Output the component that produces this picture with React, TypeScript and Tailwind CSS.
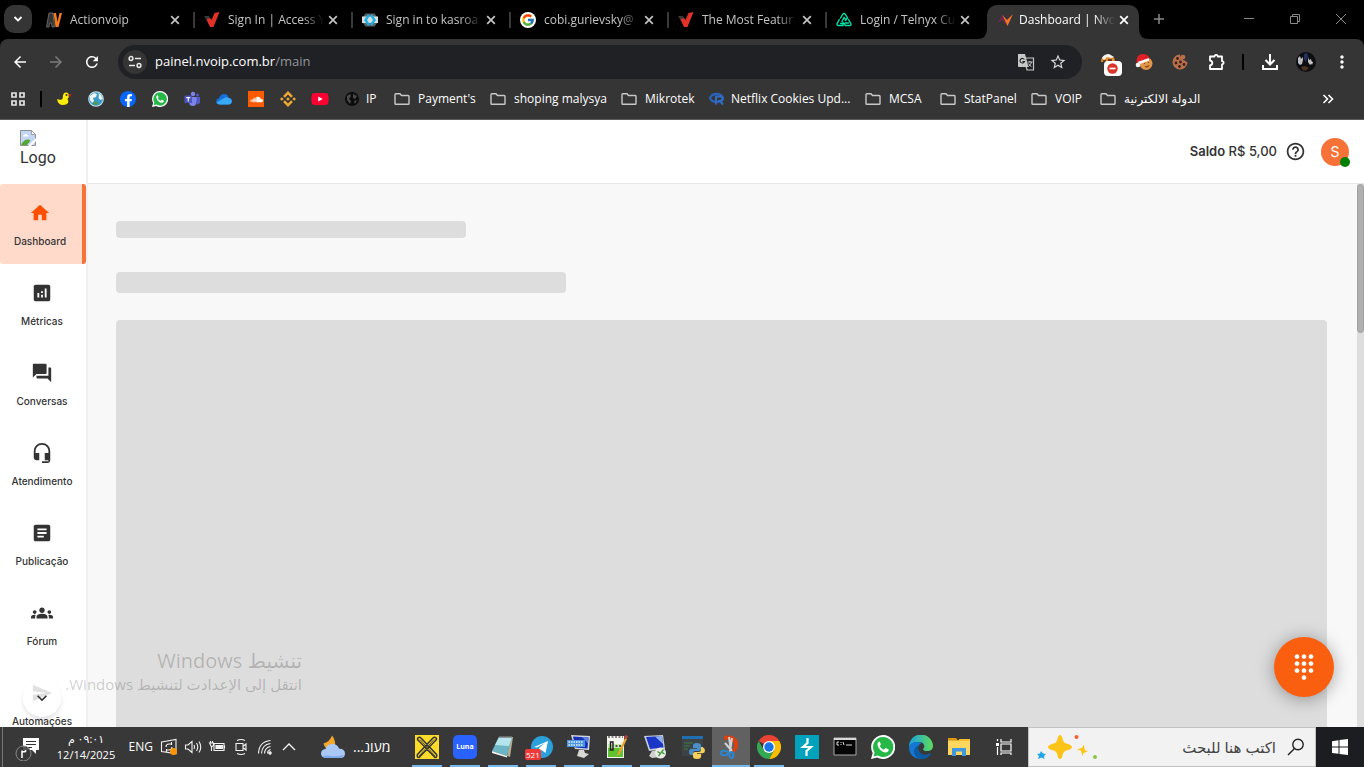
import type { ReactNode } from 'react';
import clsx from 'clsx';
import { FcGoogle } from 'react-icons/fc';
import { FaSoundcloud, FaFacebookF, FaYoutube } from 'react-icons/fa';
import { SiBinance } from 'react-icons/si';
import {
  MdAnalytics,
  MdArrowBack,
  MdArrowForward,
  MdArticle,
  MdDialpad,
  MdForum,
  MdGroups,
  MdHeadsetMic,
  MdHelpOutline,
  MdHome,
  MdKeyboardArrowDown,
  MdMoreVert,
  MdRefresh,
  MdSend,
  MdStarBorder,
} from 'react-icons/md';

/* ---------- small drawings ---------- */

const ActionVoipIcon = () => (
  <svg viewBox="0 0 16 16" className="size-4">
    <path d="M.500 15 3 1h4l1.500 14H6l-.5-4H3.500L3 15z" fill="#333" stroke="#777" strokeWidth="0.800" />
    <path d="M7.500 1H10l1.500 9L13.500 1H16l-3.500 14H9.500z" fill="#f47b20" />
  </svg>
);

const CheckVIcon = () => (
  <svg viewBox="0 0 16 16" className="size-4">
    <path d="M0 4h5l2 4-2 4z" fill="#3a3a3a" />
    <path d="M2.500 7.500 6 6l1.500 2L10.500 1l5-1L9.500 15H6z" fill="#e23227" />
  </svg>
);

const HexCodeIcon = () => (
  <svg viewBox="0 0 16 16" className="size-4">
    <path d="M3.500 1.500h9L15 5v6l-2.500 3.500h-9L1 11V5z" fill="#5c6165" />
    <path d="M0 4.500h16v6.500H0z" fill="#d9dde0" />
    <path d="M7 3 3.500 8 7 13M9 3l3.500 5L9 13" fill="none" stroke="#1bb0e4" strokeWidth="2.400" />
  </svg>
);

const GoogleTabIcon = () => (
  <span className="flex size-4 items-center justify-center rounded-full bg-white">
    <FcGoogle className="size-[14px]" />
  </span>
);

const TelnyxIcon = () => (
  <svg viewBox="0 0 16 16" className="size-4" fill="none" stroke="#00e3aa" strokeWidth="1.400" strokeLinecap="round">
    <path d="M4.500 6 7 2q1-1.200 2 0l2.500 4-2 2.500" />
    <path d="M3.300 7.500 1.200 11.500q-.6 2 1.200 2H7v-3" />
    <path d="M12.500 7.500l2.300 4q.6 2-1.200 2H9.500L8 11" />
    <path d="M6 9.500 8 5.500l1.500 2M4.500 11.500h3M9.500 11h3" />
  </svg>
);

const NvoipIcon = () => (
  <svg viewBox="0 0 16 16" className="size-4">
    <path d="M0 12 5.500 2l4.500 7-1.500 3.500L5 8z" fill="#6b2a4a" />
    <path d="M5.500 3 10 8l6-6-5.500 12z" fill="#f5722d" />
  </svg>
);

const CloseIcon = () => (
  <svg viewBox="0 0 10 10" className="size-[10px]" stroke="currentColor" strokeWidth="1.700">
    <path d="M1.200 1.200 8.800 8.800M8.800 1.200 1.200 8.800" />
  </svg>
);

const FolderIcon = () => (
  <svg viewBox="0 0 16 16" className="size-4 shrink-0" fill="none" stroke="#c8c8c8" strokeWidth="1.400">
    <path d="M1 12.500v-9q0-.8.8-.8H6L7.500 4.500h6.700q.8 0 .8.800v7.200q0 .8-.8.800H1.800q-.8 0-.8-.8z" />
  </svg>
);

const DuckIcon = () => (
  <svg viewBox="0 0 16 16" className="size-4">
    <path d="M1 8q2 1 5 .5Q7 7 7 4.500 7.500 1.500 10 1.500q2.600 0 3 3 0 2-1.500 3.500Q13 10 12 12q-1.500 2-5 2-5 0-6-6z" fill="#fcee09" />
    <path d="M12.500 3.500 15.500 3l-1 2.500h-2z" fill="#c4251a" />
    <circle cx="10.500" cy="4" r="0.900" fill="#222" />
  </svg>
);

const EarthIcon = () => (
  <svg viewBox="0 0 16 16" className="size-4">
    <circle cx="8" cy="8" r="7.800" fill="#c9e6f2" />
    <circle cx="8" cy="8" r="6.800" fill="#3c9bcb" />
    <path d="M2 5l4-3 3 1-1 3-3 1 1 3-2 2-2-3zM10 2l3 2 1.500 4-2 1-2-2 .5-3z" fill="#eef5f0" />
    <path d="M5 12l3-2 2 2-1 2H6z" fill="#4f9a4a" />
  </svg>
);

const FacebookIcon = () => (
  <span className="flex size-4 items-end justify-center rounded-full bg-[#0866ff] text-white">
    <FaFacebookF className="size-[13px]" />
  </span>
);

const WhatsAppIcon = ({ size }: { size: string }) => (
  <svg viewBox="0 0 24 24" className={size}>
    <path d="M12 0a12 12 0 0 0-10.300 18L0 24l6.200-1.600A12 12 0 1 0 12 0z" fill="#fff" />
    <path d="M12 2a10 10 0 0 0-8.500 15.200L2.600 21.400l4.300-1A10 10 0 1 0 12 2z" fill="#25b847" />
    <path d="M8.200 6.500c-.5 0-1.700 1-1.700 2.700 0 3.500 4.500 8.300 8.200 8.300 1.600 0 2.900-1 3-2.200.1-.7 0-.9-.4-1.100l-2.200-1c-.4-.2-.6-.1-.9.200l-.9 1.100c-.2.200-.5.200-.8.100-1.300-.5-2.900-1.900-3.600-3.300-.1-.3 0-.5.200-.7l.6-.8c.2-.3.200-.5.100-.8l-.9-2.100c-.2-.4-.4-.4-.7-.4z" fill="#fff" />
  </svg>
);

const TeamsIcon = () => (
  <svg viewBox="0 0 16 16" className="size-4">
    <circle cx="9" cy="3" r="2.200" fill="#7b83eb" />
    <circle cx="13.500" cy="4" r="1.500" fill="#5059c9" />
    <path d="M11 6h5v4.500q0 3-3 3z" fill="#5059c9" />
    <path d="M5 6h7.500v5q0 4-3.700 4Q5 15 5 11z" fill="#7b83eb" />
    <rect x="0.500" y="4.500" width="7.500" height="7.500" rx="0.800" fill="#4b53bc" />
    <path d="M2.300 6.600h4M4.300 6.600v4" stroke="#fff" strokeWidth="1.100" />
  </svg>
);

const OneDriveIcon = () => (
  <svg viewBox="0 0 16 16" className="size-4">
    <path d="M3.500 13.500Q0 13.500.2 10 .5 7.500 3 7.200 4.500 3 8.500 3q3.300.2 4.200 3.800Q16 7.500 15.800 10.200q-.3 3.300-3.300 3.300z" fill="#1570dc" />
    <path d="M.5 11.500 9 6.500q2-.5 3.700.4Q16 7.500 15.800 10.200q-.3 3.300-3.300 3.300h-9q-2 0-3-2z" fill="#3aa9f5" />
  </svg>
);

const SoundcloudIcon = () => (
  <span className="flex size-4 items-center justify-center bg-[#ff5a00] text-white">
    <FaSoundcloud className="size-[13px]" />
  </span>
);

const GlobeDarkIcon = () => (
  <svg viewBox="0 0 16 16" className="size-4 shrink-0">
    <circle cx="8" cy="8" r="7" fill="#0c0c0c" />
    <path d="M3 5l3-2 1 2-2 3 2 2-1 3-3-4zM9 3l4 2-2 3-2-1zM10 10l3-1-2 4z" fill="#4a4a4a" />
  </svg>
);

const RIcon = () => (
  <svg viewBox="0 0 16 16" className="size-4 shrink-0">
    <ellipse cx="7.500" cy="7" rx="6.300" ry="4" fill="none" stroke="#2b62b5" strokeWidth="2.400" />
    <path d="M7 13.500V5.500h4.500q2.300.2 2.300 2.300T11.500 10H9M11 10l3 3.500" fill="none" stroke="#2f6cc4" strokeWidth="2" />
  </svg>
);

const TuneIcon = () => (
  <svg viewBox="0 0 16 16" className="size-4" fill="none" stroke="#e8e8e8" strokeWidth="1.500">
    <circle cx="4" cy="4.500" r="1.900" />
    <path d="M8 4.500h6M2 11.500h6" />
    <circle cx="12" cy="11.500" r="1.900" />
  </svg>
);

const TranslateIcon = () => (
  <svg viewBox="0 0 18 18" className="size-[18px]">
    <path d="M7 5h9.500v12H10z" fill="none" stroke="#c7c7c7" strokeWidth="1.200" />
    <path d="M1 1h7L11.500 14H2q-1 0-1-1z" fill="#c7c7c7" />
    <path d="M7.300 6.500A2.300 2.300 0 1 0 7.500 8.500H5.500" fill="none" stroke="#202124" strokeWidth="1.100" />
    <path d="M10.500 9h5M13 8v1m1.500 0q-.5 2.500-3 4.500m0-3q1 2 3 3.200" fill="none" stroke="#c7c7c7" strokeWidth="1" />
  </svg>
);

const BlockerIcon = () => (
  <span className="relative flex size-5 items-center justify-center">
    <svg viewBox="0 0 20 20" className="size-5">
      <path d="M3 10q0-7 7-7t7 7z" fill="#e98a2c" />
      <path d="M4 6q2-4 7-4l5 3-3 1-4-1-3 3z" fill="#f4f4f4" />
      <path d="M5 9h3M10 8h4" stroke="#3a2a20" strokeWidth="1.400" />
    </svg>
    <svg viewBox="0 0 18 15" className="absolute top-[9px] left-[6px] h-[15px] w-[18px]">
      <rect width="18" height="15" rx="4" fill="#fff" />
      <circle cx="8.500" cy="7.500" r="5.200" fill="#d9352a" />
      <path d="M5.500 7.500h6" stroke="#fff" strokeWidth="1.700" />
    </svg>
  </span>
);

const SantaCookieIcon = () => (
  <svg viewBox="0 0 18 18" className="size-[18px]">
    <circle cx="11" cy="10.500" r="6.500" fill="#e0954a" />
    <path d="M9 10.500h1M13 9.500h1M10 13.500q2 1 4-1" stroke="#8b4a1a" strokeWidth="1.200" fill="none" />
    <path d="M1.500 10Q1 1 8 1q5 0 7 5z" fill="#e01f26" />
    <path d="M2.500 9 14 5v2.500L5 11z" fill="#fff" />
    <circle cx="3" cy="12" r="2.300" fill="#f7f7f7" />
  </svg>
);

const CookieIcon = () => (
  <svg viewBox="0 0 16 16" className="size-4">
    <path d="M8 .5A7.500 7.500 0 1 0 15.500 8q-2 0-2.500-1.500-2.500 0-2.500-2.500Q8 3 8 .5z" fill="#b9704a" />
    <circle cx="11" cy="3" r="2.300" fill="#b9704a" />
    <g fill="#3a201a">
      <circle cx="5.500" cy="4.500" r="1.400" />
      <circle cx="4" cy="9" r="1.400" />
      <circle cx="8.500" cy="8" r="1.400" />
      <circle cx="7.500" cy="12.500" r="1.400" />
      <circle cx="12" cy="10.500" r="1.400" />
    </g>
  </svg>
);

const ExtensionIcon = () => (
  <svg viewBox="0 0 18 18" className="size-[18px]" fill="none" stroke="#fff" strokeWidth="1.800">
    <path d="M3 3.500h4.500a1.600 1.600 0 0 1 3.200 0H15v4.700a1.600 1.600 0 0 1 0 3.200V16H3v-3.500q2.300-.5 2.300-2.500T3 7.500z" strokeLinejoin="round" />
  </svg>
);

const DownloadIcon = () => (
  <svg viewBox="0 0 18 18" className="size-[18px]" fill="none" stroke="#fff" strokeWidth="2">
    <path d="M9 1v10M4.500 7 9 11.500 13.500 7M2 12v4h14v-4" />
  </svg>
);

const ProfileIcon = () => (
  <svg viewBox="0 0 20 20" className="size-5">
    <circle cx="10" cy="10" r="10" fill="#0d0e12" />
    <path d="M2 6l2-2 1 3 2-2v3l-1 4-2 1-2-2zM12 5l1 3 2-1 1 4-2 2-2-3z" fill="#b9bdc0" />
    <path d="M8 2l3-1 1 3-2 6-2-3z" fill="#27315e" />
    <path d="M14 9l3 1-1 3z" fill="#d9cfc4" />
    <path d="M5 15l4-1 4 2-3 2.500H7z" fill="#4a331c" />
  </svg>
);

const BrokenImageIcon = () => (
  <svg viewBox="0 0 16 16" className="size-4">
    <path d="M.5.500h11l4 4v11H.500z" fill="#c3d5f5" stroke="#8f8f8f" />
    <path d="M11.500.500v4h4z" fill="#fff" stroke="#8f8f8f" strokeWidth="0.800" />
    <path d="M3 6.500q0-2 2-2 1.500-1.500 2.500.5 1.500.2 1 1.500z" fill="#fff" />
    <path d="M1 15q3-6 7-5.500 1.500 0 2.500 1L7 15z" fill="#51a731" />
    <path d="M8 16 16 8v3l-5 5z" fill="#fff" />
  </svg>
);

/* ---------- browser chrome ---------- */

const TABS: { title: string; icon: ReactNode }[] = [
  { title: 'Actionvoip', icon: <ActionVoipIcon /> },
  { title: 'Sign In | Access Y', icon: <CheckVIcon /> },
  { title: 'Sign in to kasroa', icon: <HexCodeIcon /> },
  { title: 'cobi.gurievsky@', icon: <GoogleTabIcon /> },
  { title: 'The Most Featur', icon: <CheckVIcon /> },
  { title: 'Login / Telnyx Cu', icon: <TelnyxIcon /> },
];

// long titles fade out just before the close button
const TITLE = 'w-24 overflow-hidden whitespace-nowrap [mask-image:linear-gradient(to_right,black_78%,transparent)]';

function TabStrip() {
  return (
    <div className="flex h-[39px] items-start bg-black text-xs text-[#c4c4c4]">
      <button aria-label="Search tabs" className="mt-[5px] mr-1.5 ml-1 flex size-7 items-center justify-center rounded-[10px] bg-[#353535] text-white">
        <svg viewBox="0 0 10 10" className="size-[10px]" fill="none" stroke="currentColor" strokeWidth="1.800">
          <path d="M1.500 3 5 6.500 8.500 3" />
        </svg>
      </button>
      {TABS.map((tab, i) => (
        <div key={tab.title} className="flex h-[39px] w-[158px] items-center pl-2">
          {tab.icon}
          <span className={clsx(TITLE, 'ml-2')}>{tab.title}</span>
          <button aria-label={`Close ${tab.title}`} className="flex size-[18px] items-center justify-center">
            <CloseIcon />
          </button>
          {i < TABS.length - 1 && <span className="ml-[9px] h-4 w-0.5 bg-[#3a3a3a]" />}
        </div>
      ))}
      <div className="relative mt-[5px] ml-px flex h-[34px] w-[152px] items-center rounded-t-[10px] bg-[#353535] pb-1 pl-[10px] text-white">
        <svg viewBox="0 0 10 10" className="absolute bottom-0 -left-[10px] size-[10px]">
          <path d="M10 0v10H0Q10 10 10 0z" fill="#353535" />
        </svg>
        <svg viewBox="0 0 10 10" className="absolute -right-[10px] bottom-0 size-[10px]">
          <path d="M0 0v10h10Q0 10 0 0z" fill="#353535" />
        </svg>
        <NvoipIcon />
        <span className={clsx(TITLE, 'ml-1.5')}>Dashboard | Nvo</span>
        <button aria-label="Close Dashboard" className="flex size-[18px] items-center justify-center">
          <CloseIcon />
        </button>
      </div>
      <button aria-label="New tab" className="mt-[9px] ml-[10px] flex size-5 items-center justify-center text-[#888]">
        <svg viewBox="0 0 12 12" className="size-3" stroke="currentColor" strokeWidth="1.500">
          <path d="M6 1v10M1 6h10" />
        </svg>
      </button>
      <div className="ml-auto flex h-[38px] text-[#8a8a8a]">
        <button aria-label="Minimize" className="flex w-[46px] items-center justify-center">
          <svg viewBox="0 0 10 10" className="size-[10px]" stroke="currentColor">
            <path d="M0 4.500h10" />
          </svg>
        </button>
        <button aria-label="Restore" className="flex w-[46px] items-center justify-center">
          <svg viewBox="0 0 10 10" className="size-[10px]" fill="none" stroke="currentColor">
            <path d="M.5 2.500h7v7h-7zM2.500 2.500v-2h7v7h-2" />
          </svg>
        </button>
        <button aria-label="Close window" className="flex w-[46px] items-center justify-center">
          <svg viewBox="0 0 10 10" className="size-[10px]" stroke="currentColor">
            <path d="M0 0l10 10M10 0 0 10" />
          </svg>
        </button>
      </div>
    </div>
  );
}

function Toolbar() {
  const slot = 'flex w-9 shrink-0 items-center justify-center';
  return (
    <div className="flex h-[46px] items-center rounded-t-lg bg-[#353535] pr-1 pl-0.5 text-white">
      <button aria-label="Back" className={slot}>
        <MdArrowBack className="size-[18px]" />
      </button>
      <button aria-label="Forward" className={clsx(slot, 'text-[#7c7c7c]')}>
        <MdArrowForward className="size-[18px]" />
      </button>
      <button aria-label="Reload" className={slot}>
        <MdRefresh className="size-[18px]" />
      </button>
      <div className="mx-2 flex h-[34px] flex-1 items-center rounded-full bg-[#202124] pr-[15px] pl-[5px]">
        <button aria-label="Site information" className="flex size-6 items-center justify-center rounded-full bg-[#353535]">
          <TuneIcon />
        </button>
        <div className="ml-2 flex-1 text-[13px]">
          painel.nvoip.com.br<span className="text-[#93969b]">/main</span>
        </div>
        <button aria-label="Translate" className="mr-3.5">
          <TranslateIcon />
        </button>
        <button aria-label="Bookmark" className="text-[#d5d5d5]">
          <MdStarBorder className="size-[18px]" />
        </button>
      </div>
      <button aria-label="Blocker" className={slot}><BlockerIcon /></button>
      <button aria-label="Santa cookie" className={slot}><SantaCookieIcon /></button>
      <button aria-label="Cookies" className={slot}><CookieIcon /></button>
      <button aria-label="Extensions" className={slot}><ExtensionIcon /></button>
      <span className="mx-2 h-4 w-0.5 bg-black" />
      <button aria-label="Downloads" className={slot}><DownloadIcon /></button>
      <button aria-label="Profile" className={slot}><ProfileIcon /></button>
      <button aria-label="Menu" className={slot}>
        <MdMoreVert className="size-5" />
      </button>
    </div>
  );
}

const SHORTCUTS: { name: string; icon: ReactNode }[] = [
  { name: 'Duck', icon: <DuckIcon /> },
  { name: 'Earth', icon: <EarthIcon /> },
  { name: 'Facebook', icon: <FacebookIcon /> },
  { name: 'WhatsApp', icon: <WhatsAppIcon size="size-4" /> },
  { name: 'Teams', icon: <TeamsIcon /> },
  { name: 'OneDrive', icon: <OneDriveIcon /> },
  { name: 'SoundCloud', icon: <SoundcloudIcon /> },
  { name: 'Binance', icon: <SiBinance className="size-4 text-[#f3a92f]" /> },
  {
    name: 'YouTube',
    icon: <FaYoutube className="size-[18px] text-[#ff0033] [background:linear-gradient(white,white)_center/6px_6px_no-repeat]" />,
  },
];

const BOOKMARKS: { name: string; width: string; icon?: ReactNode }[] = [
  { name: 'IP', width: 'w-[50px]', icon: <GlobeDarkIcon /> },
  { name: "Payment's", width: 'w-24' },
  { name: 'shoping malysya', width: 'w-[131px]' },
  { name: 'Mikrotek', width: 'w-[88px]' },
  { name: 'Netflix Cookies Upd...', width: 'w-[156px]', icon: <RIcon /> },
  { name: 'MCSA', width: 'w-[75px]' },
  { name: 'StatPanel', width: 'w-[91px]' },
  { name: 'VOIP', width: 'w-[69px]' },
  { name: 'الدولة الالكترنية', width: 'w-[110px]' },
];

function BookmarksBar() {
  return (
    <nav className="flex h-[35px] items-center border-b border-[#5c5c5c] bg-[#353535] pb-1.5 text-xs text-white">
      <button aria-label="Apps" className="ml-[10px]">
        <svg viewBox="0 0 16 16" className="size-4" fill="none" stroke="#e4e4e4" strokeWidth="1.700">
          <path d="M2 2h4v4H2zM10 2h4v4h-4zM2 10h4v4H2zM10 10h4v4h-4z" />
        </svg>
      </button>
      <span className="ml-3.5 h-4 w-0.5 bg-black" />
      <div className="ml-1.5 flex">
        {SHORTCUTS.map((s) => (
          <a key={s.name} href="#" aria-label={s.name} className="flex w-8 items-center justify-center">
            {s.icon}
          </a>
        ))}
      </div>
      <div className="ml-2 flex">
        {BOOKMARKS.map((b) => (
          <a key={b.name} href="#" className={clsx('flex shrink-0 items-center whitespace-nowrap', b.icon ? 'gap-1.5' : 'gap-2', b.width)}>
            {b.icon ?? <FolderIcon />}
            {b.name}
          </a>
        ))}
      </div>
      <button aria-label="More bookmarks" className="mr-[30px] ml-auto">
        <svg viewBox="0 0 12 10" className="h-[10px] w-3" fill="none" stroke="#fff" strokeWidth="1.600">
          <path d="M1.500 1 5.500 5l-4 4M6.500 1l4 4-4 4" />
        </svg>
      </button>
    </nav>
  );
}

/* ---------- page ---------- */

const MENU = [
  { label: 'Dashboard', Icon: MdHome },
  { label: 'Métricas', Icon: MdAnalytics },
  { label: 'Conversas', Icon: MdForum },
  { label: 'Atendimento', Icon: MdHeadsetMic },
  { label: 'Publicação', Icon: MdArticle },
  { label: 'Fórum', Icon: MdGroups },
  { label: 'Automações', Icon: MdSend },
];

function Sidebar() {
  return (
    <aside className="relative w-[88px] shrink-0 overflow-hidden border-r-2 border-[#f0f0f0] bg-white">
      <div className="h-16 pt-[10px] pl-5 font-[Roboto,sans-serif] text-base leading-6 text-[#333]">
        <BrokenImageIcon />
        Logo
      </div>
      <nav>
        {MENU.map(({ label, Icon }, i) => (
          <a
            key={label}
            href="#"
            className={clsx(
              'flex h-20 flex-col items-center gap-[9px] pt-[18px] text-[10px] leading-4 font-medium text-[#333]',
              i === 0 ? 'w-[86px] rounded-[3px] border-r-4 border-[#f67236] bg-[#ffdacb] pr-0.5' : 'w-[84px]',
            )}
          >
            <Icon className={clsx('size-[22px] shrink-0', i === 0 && 'text-[#ff4f00]')} />
            {label}
          </a>
        ))}
      </nav>
      <button aria-label="Scroll down" className="absolute bottom-[10px] left-[23px] flex size-[38px] items-center justify-center rounded-full bg-white/85 text-[#333] shadow-md">
        <MdKeyboardArrowDown className="size-5" />
      </button>
    </aside>
  );
}

function PageHeader() {
  return (
    <header className="flex h-16 shrink-0 items-center justify-end border-b border-[#e8e8e8] bg-white pr-[15px]">
      <span className="text-[13px] font-medium text-[#333]">
        <span className="font-semibold">Saldo</span> R$ 5,00
      </span>
      <button aria-label="Help" className="ml-2 text-[#333]">
        <MdHelpOutline className="size-[21px]" />
      </button>
      <button aria-label="Account" className="relative ml-[15px] flex size-7 items-center justify-center rounded-full bg-[#f67236] text-sm text-white">
        S
        <span className="absolute -right-px -bottom-px size-[10px] rounded-full bg-[#008000]" />
      </button>
    </header>
  );
}

function Dashboard() {
  return (
    <div className="flex min-h-0 flex-1 bg-[#f8f8f8]">
      <main className="flex min-w-0 flex-1 flex-col pt-[37px] pr-[30px] pl-7">
        <div className="h-[17px] w-[350px] rounded bg-[#ddd]" />
        <div className="mt-[34px] h-[21px] w-[450px] rounded bg-[#ddd]" />
        <div className="mt-[27px] flex-1 rounded-t bg-[#ddd]" />
      </main>
      <div className="w-[7px] bg-[#dedede]">
        <div className="h-[149px] rounded-full border border-[#a0a0a0] bg-[#b0b0b0]" />
      </div>
    </div>
  );
}

/* ---------- taskbar ---------- */

const TrayIcon = ({ label, children }: { label: string; children: ReactNode }) => (
  <button aria-label={label} className="flex w-6 items-center justify-center">
    <svg viewBox="0 0 16 16" className="size-4 overflow-visible" fill="none" stroke="#f2f2f2" strokeWidth="1.100">
      {children}
    </svg>
  </button>
);

function Tray() {
  return (
    <div className="flex items-stretch">
      <span className="ml-0.5 w-px bg-[#777]" />
      <button aria-label="Notifications" className="ml-2.5 w-7">
        <svg viewBox="0 0 28 28" className="size-7">
          <path d="M10 5h16v12h-3v4l-4-4h-9z" fill="#fff" />
          <path d="M13 8.500h10M13 11.500h10M13 14.500h6" stroke="#333" strokeWidth="1.200" />
          <circle cx="10.500" cy="20.500" r="7.500" fill="#383838" fillOpacity="0.850" stroke="#8a8a8a" />
          <path d="M9 25v-7.500q0 2 3.500 1V17" fill="none" stroke="#fff" strokeWidth="1.500" />
        </svg>
      </button>
      <div className="flex w-[90px] flex-col items-center justify-center text-[11px] leading-4">
        <span dir="rtl">٠٩:٠١ م</span>
        <span>12/14/2025</span>
      </div>
      <span className="flex w-[26px] items-center justify-end pr-1 text-xs">ENG</span>
      <TrayIcon label="Updates">
        <path d="M.5 3 15 .500v14L.5 12.500zM5 8q0-3 3-3h2.500M10.500 3v3M11 8q0 3-3 3H5.500M5.500 13v-3" />
        <circle cx="12.500" cy="12.500" r="3.500" fill="#ff9500" stroke="none" />
      </TrayIcon>
      <TrayIcon label="Volume">
        <path d="M.5 6h2.500L7 2.500v11L3 10H.500zM9 6q1.200 2 0 4M11.500 4q2.500 4 0 8M14 2.500q3.500 5.500 0 11" />
      </TrayIcon>
      <TrayIcon label="Battery">
        <path d="M5 4.500h10v7H5zM15.500 6.500v3" />
        <path d="M7 6.500h6.500v3H7z" fill="#f2f2f2" />
        <path d="M.5 4h4v2.500L2.500 8zM1.500 4V2M3.500 4V2M2.500 8v4" />
      </TrayIcon>
      <TrayIcon label="Camera">
        <path d="M3 4.500h7v7H3zM10.500 7 13 5v6l-2.500-2M4 1.500q4-2 8 0M4 14.500q4 2 8 0" />
      </TrayIcon>
      <TrayIcon label="Network">
        <path d="M4.500 14.500q.5-9 9-10M7.500 14.500q.5-6 6-7M10.500 14.500q0-3 3-4M1.500 14.500q.5-12 12-13" />
        <circle cx="13" cy="14" r="1.200" fill="#f2f2f2" />
      </TrayIcon>
      <TrayIcon label="Show hidden icons">
        <path d="M2 11l6-6 6 6" strokeWidth="1.400" />
      </TrayIcon>
      <button className="ml-5 flex items-center gap-2 text-sm">
        <svg viewBox="0 0 24 24" className="size-6">
          <path d="M11 .500q-2 6-8.500 8Q4 15 10 14q5-1 4-7Q13.500 3 11 .500z" fill="#f7a62c" />
          <path d="M5 23q-5-.5-5-4.500 0-4 4.500-4.500 1.500-5 7-5 5 0 6.500 4.500 6 .5 6 5t-5 4.500z" fill="#a9c8f5" />
          <path d="M1 21q5-1 9 0t13-1q-1.500 3-4 3H5q-3 0-4-2z" fill="#7fa9ea" />
        </svg>
        <span dir="rtl">מעונ...</span>
      </button>
    </div>
  );
}

type TaskbarApp = { name: string; state: 'open' | 'active' | 'idle'; icon: ReactNode };

const APPS: TaskbarApp[] = [
  {
    name: 'XLite',
    state: 'open',
    icon: (
      <svg viewBox="0 0 24 24" className="size-6" fill="none" stroke="#333">
        <path d="M0 0h24v24H0z" fill="#fddb2b" stroke="none" />
        <path d="M2.500 3.500q1.500-2.500 4 0l15 16q1 3-1.500 3L4 6Q2 4.500 2.500 3.500zM21.500 3.500q-1.500-2.500-4 0l-15 16q-1 3 1.500 3L20 6q2-1.500 1.500-2.500z" strokeWidth="1.500" />
        <path d="M5 4.500 20 21M19 4.500 4 21" strokeWidth="0.800" />
      </svg>
    ),
  },
  {
    name: 'Luna',
    state: 'open',
    icon: <span className="flex size-6 items-center justify-center rounded-[5px] bg-[#2962ff] text-[7px] font-bold text-white">Luna</span>,
  },
  {
    name: 'Notepad',
    state: 'open',
    icon: (
      <svg viewBox="0 0 24 24" className="size-6">
        <path d="M20 2h2l-3 20-3-1z" fill="#b7ad8e" />
        <path d="M8 2h13l-5 19L1 16z" fill="#6db5c4" />
        <path d="M8 2h13l-3 9L4 10z" fill="#b5e4ec" />
        <path d="M1 16l15 5v1.500L1 18z" fill="#f5f5f5" />
        <path d="M8 2h13" stroke="#777" strokeWidth="1.500" />
      </svg>
    ),
  },
  {
    name: 'Telegram',
    state: 'open',
    icon: (
      <span className="relative">
        <svg viewBox="0 0 24 24" className="size-6">
          <circle cx="13" cy="12" r="11" fill="#2aa1da" />
          <path d="M5 12 19 6l-2.500 12-4-3-2 2-.5-4 6-5-8 4.500z" fill="#fff" />
        </svg>
        <span className="absolute top-3.5 -left-1 rounded-[2px] bg-[#ee3a36] px-px text-[8px] leading-[11px] text-white">521</span>
      </span>
    ),
  },
  {
    name: 'On-screen keyboard',
    state: 'open',
    icon: (
      <svg viewBox="0 0 24 24" className="size-6">
        <path d="M4 0l19 1-1 14-14-1z" fill="#cfd6de" />
        <path d="M6 1.500l15.500 1-1 11-12-1z" fill="#1630b8" />
        <path d="M15 2l6.500.5-.5 6z" fill="#5f7fe0" />
        <path d="M12 15h5l1 3 4 1-5 4-7-2z" fill="#d8d8d4" />
        <path d="M0 5h18v7H0z" fill="#4b95df" />
        <path d="M1.500 7h15M1.500 10h15" stroke="#e8f3ff" strokeWidth="1.400" strokeDasharray="1.500 1" />
      </svg>
    ),
  },
  {
    name: 'Notepad editor',
    state: 'open',
    icon: (
      <svg viewBox="0 0 24 24" className="size-6 overflow-visible">
        <path d="M2 1h17v22H2z" fill="#f5f7ee" />
        <path d="M3 13h15v9H3z" fill="#62c131" />
        <path d="M3 9h15v4H3z" fill="#c8ecaf" />
        <path d="M5.500 7H8v8H5.500zM10.500 11h2M14 11h2" fill="none" stroke="#222" strokeWidth="1.500" />
        <path d="M3 2h15" stroke="#888" strokeWidth="2" strokeDasharray="2 1.500" />
        <path d="M20 3 13 18l-1 3 3-2 7-15z" fill="#e9a62e" />
        <path d="M20 0l3 1-1 3-3-1z" fill="#b94141" />
      </svg>
    ),
  },
  {
    name: 'Remote desktop',
    state: 'open',
    icon: (
      <svg viewBox="0 0 24 24" className="size-6">
        <path d="M1 1l19-1 2 14-16 2z" fill="#c7d0dc" />
        <path d="M3 2l16-1 1.500 11.500L7 14z" fill="#1a36c4" />
        <path d="M12 1.500 19 1l1 8z" fill="#8fb0ee" />
        <path d="M9 16l6-1 2 7-8 1-3-2z" fill="#cfcfcb" />
        <circle cx="17.500" cy="18" r="5.500" fill="#ecebe4" />
        <path d="M14.500 16.500l3 2-2 2.500M20.500 14.500l-2 2.500 3 2" fill="none" stroke="#3c9b3b" strokeWidth="1.400" />
      </svg>
    ),
  },
  {
    name: 'Python console',
    state: 'idle',
    icon: (
      <span className="relative">
        <svg viewBox="0 0 24 24" className="size-6">
          <path d="M1 1h21v20H1z" fill="#3d4345" />
          <path d="M1 1h21v3H1z" fill="#1d6fb0" />
          <path d="M3 8h9M3 11h6M3 14h4" stroke="#3c7a46" />
        </svg>
        <svg viewBox="0 0 16 16" className="absolute top-2 left-2 size-4 overflow-visible">
          <path d="M8 0q-4 0-4 2.500V5h4v.800H2.500Q0 6 0 9t2.500 3H4V9.500Q4 8 6 8h4q2 0 2-2V2.500Q12 0 8 0z" fill="#4a8fca" />
          <path d="M8 16q4 0 4-2.500V11H8v-.800h5.500Q16 10 16 7.500T13.500 4H12v3q0 2-2 2H6q-2 0-2 2v2.500Q4 16 8 16z" fill="#f7d256" />
        </svg>
      </span>
    ),
  },
  {
    name: 'Snipping tool',
    state: 'active',
    icon: (
      <svg viewBox="0 0 24 24" className="size-6">
        <path d="M5 1q11-2 14 6 1 10-6 11-3 0-1-2 4-3 3-7Q13 4 5 5z" fill="#d8400e" />
        <path d="M10 2l2 14M13 3l-2 14M6 8l7 8" stroke="#ced1d3" strokeWidth="2" />
        <g fill="none" stroke="#2c86d0" strokeWidth="2">
          <ellipse cx="5.500" cy="18" rx="3.500" ry="2.300" />
          <ellipse cx="12.500" cy="20" rx="2" ry="3" />
        </g>
      </svg>
    ),
  },
  {
    name: 'Chrome',
    state: 'open',
    icon: (
      <svg viewBox="0 0 24 24" className="size-6">
        <path d="M12 12 1.600 6A12 12 0 0 1 22.400 6z" fill="#ea4335" />
        <path d="M12 6h10.400A12 12 0 0 1 12 24l5.200-9z" fill="#fbbc04" />
        <path d="M6.800 15 1.600 6A12 12 0 0 0 12 24l5.200-9z" fill="#34a853" />
        <circle cx="12" cy="12" r="6" fill="#fff" />
        <circle cx="12" cy="12" r="4.700" fill="#1a73e8" />
      </svg>
    ),
  },
  {
    name: 'Lightning',
    state: 'idle',
    icon: (
      <svg viewBox="0 0 24 24" className="size-6">
        <path d="M0 0h24v24H0z" fill="#00a3bb" />
        <path d="M12.500 3v5L8 12h8l-4.500 4v5" fill="none" stroke="#fff" strokeWidth="2.200" />
      </svg>
    ),
  },
  {
    name: 'Command prompt',
    state: 'idle',
    icon: (
      <svg viewBox="0 0 24 24" className="size-6">
        <path d="M1 3h22v17H1z" fill="#050505" stroke="#a8a8a8" />
        <path d="M1 3h22v2H1z" fill="#d9d9d9" />
        <path d="M6 7H4v3h2M8 7v1M8 9v1M10 7l1 3M13 10h6" fill="none" stroke="#ddd" />
      </svg>
    ),
  },
  { name: 'WhatsApp desktop', state: 'idle', icon: <WhatsAppIcon size="size-6" /> },
  {
    name: 'Edge',
    state: 'idle',
    icon: (
      <svg viewBox="0 0 24 24" className="size-6">
        <defs>
          <linearGradient id="edge-top" x1="0" y1="0.500" x2="1" y2="0.500">
            <stop offset="0" stopColor="#1a9fe0" />
            <stop offset="1" stopColor="#5fdc5a" />
          </linearGradient>
        </defs>
        <path d="M0 12A12 12 0 0 1 24 11q0 5-6 5-4 0-4-2 2-1 1-4-1-3-5-3-7 0-10 5z" fill="url(#edge-top)" />
        <path d="M0 12q1-4 6-5 5-.5 7 1-4 1-4 5.500 1 6 7 6.500 3 0 6-2-3 6-10 6Q0 23 0 12z" fill="#1577cf" />
        <path d="M9 13q0 7 8 7 3 0 5-2-3 6-9 6-8-1-8-8 1-5 6-6-2 1-2 3z" fill="#0c59a4" />
      </svg>
    ),
  },
  {
    name: 'Explorer',
    state: 'idle',
    icon: (
      <svg viewBox="0 0 24 24" className="size-6">
        <path d="M1 3h8l2 2.500H1z" fill="#dc9a0c" />
        <path d="M1 5.500h22V20H1z" fill="#ffd75e" />
        <path d="M5 21v-8h14v8h-4v-4.500H9V21z" fill="#3f97e0" />
        <path d="M1 5.500h10L12.500 4H23v2H1z" fill="#f6bd31" />
      </svg>
    ),
  },
];

function Taskbar() {
  return (
    <footer className="flex h-10 shrink-0 bg-[#383838] text-white">
      <Tray />
      <div className="ml-auto flex">
        {APPS.map((app) => (
          <button
            key={app.name}
            aria-label={app.name}
            className={clsx('relative flex w-[38px] items-center justify-center', app.state === 'active' && 'bg-[#616161]')}
          >
            {app.icon}
            {app.state !== 'idle' && (
              <span className={clsx('absolute bottom-0 h-0.5 bg-[#76b9ed]', app.state === 'active' ? 'inset-x-0' : 'inset-x-1')} />
            )}
          </button>
        ))}
      </div>
      <button aria-label="Task view" className="mr-[15px] ml-[17px] w-[18px]">
        <svg viewBox="0 0 18 18" className="size-[18px]" fill="none" stroke="#fff" strokeWidth="1.200">
          <path d="M6 1v3h10V1M6 6h10v7H6zM6 17v-2h10v2M2.500 1v2M2.500 9v8" />
          <path d="M1 5h3v3H1z" fill="#fff" stroke="none" />
        </svg>
      </button>
      <label className="flex w-72 items-center border border-[#c2c2c2] bg-[#f2f2f2] pr-[10px] pl-2 text-[#333]">
        <svg viewBox="0 0 62 26" className="h-[26px] w-[62px] shrink-0">
          <path d="M23 1q2 0 3 5.500 1 2.500 3.500 3 5.500 1.500 5.500 3.500t-5.500 3.500q-2.500.5-3.500 3Q25 25 23 25t-3-5.500q-1-2.500-3.500-3Q11 15 11 13t5.500-3.500q2.500-.5 3.500-3Q21 1 23 1z" fill="#fcc419" />
          <path d="M46 11q1 0 1.500 3.500T51 16.500q0 1-3 2t-2 3.500q-1 0-1.500-3.500T40 16.500q0-1 3-2t3-3.500z" fill="#fcc419" />
          <path d="M4 17l2 2.500 3 .5-2 2 .5 3-3-1.500L1 25l1-3-2-2 3-.5z" fill="#1fa3ea" />
          <circle cx="39.500" cy="3" r="2" fill="#f2622e" />
          <circle cx="58" cy="23" r="2" fill="#8bc34a" />
        </svg>
        <input type="text" dir="rtl" aria-label="بحث" placeholder="اكتب هنا للبحث" className="min-w-0 flex-1 bg-transparent text-[15px] placeholder:text-[#444]" />
        <svg viewBox="0 0 18 18" className="ml-[11px] size-[18px] shrink-0" fill="none" stroke="#222" strokeWidth="1.400">
          <circle cx="11" cy="6.500" r="5.200" />
          <path d="M7.500 10.500 1 17" />
        </svg>
      </label>
      <button aria-label="Start" className="flex w-12 items-center justify-center bg-[#1c1d20]">
        <svg viewBox="0 0 16 16" className="size-4" fill="#fff">
          <path d="M0 2.200 6.500 1.300v6.300H0zM7.500 1.100 16 0v7.600H7.500zM0 8.500h6.500v6.300L0 13.900zM7.500 8.500H16V16l-8.500-1.100z" />
        </svg>
      </button>
    </footer>
  );
}

export default function App() {
  return (
    <div className="relative flex h-screen flex-col overflow-hidden font-['Open_Sans','Noto_Sans','DejaVu_Sans',sans-serif]">
      <div className="shrink-0 bg-black">
        <TabStrip />
        <Toolbar />
        <BookmarksBar />
      </div>
      <div className="flex min-h-0 flex-1 font-[Inter,sans-serif]">
        <Sidebar />
        <div className="flex min-w-0 flex-1 flex-col">
          <PageHeader />
          <Dashboard />
        </div>
      </div>
      <Taskbar />

      {/* floating dialer */}
      <button aria-label="Dialpad" className="absolute right-[30px] bottom-[70px] flex size-[60px] items-center justify-center rounded-full bg-[#fa5f10] text-white shadow-[0_2px_18px_rgba(0,0,0,0.35)]">
        <MdDialpad className="size-7" />
      </button>

      {/* activation notice */}
      <div dir="rtl" className="pointer-events-none absolute bottom-[72px] left-[62px] w-60 whitespace-nowrap text-black/20">
        <div className="text-xl leading-6">تنشيط Windows</div>
        <div className="text-[15px] leading-[22px]">انتقل إلى الإعدادت لتنشيط Windows.</div>
      </div>
    </div>
  );
}
